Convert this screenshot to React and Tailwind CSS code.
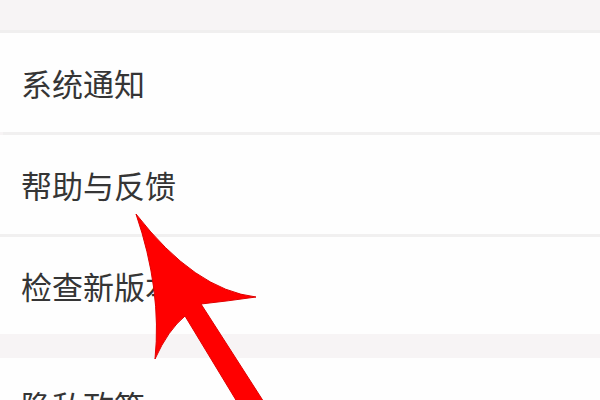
import React from "react";

const font = { fontFamily: '"Noto Sans CJK SC", "Noto Sans", sans-serif' };

function Row({ label, h = "h-[97px]" }) {
  return (
    <div className={`bg-[#fefefe] ${h} flex items-center pl-[21px]`}>
      <span className="text-[31px] leading-none text-[#353535]" style={font}>
        {label}
      </span>
    </div>
  );
}

export default function App() {
  return (
    <div className="relative w-[600px] h-[400px] overflow-hidden bg-[#f7f4f5]">
      <div className="h-[30px] bg-[#f7f4f5]" />
      <div className="h-[3px] bg-[#f0efef]" />
      <Row label="系统通知" h="h-[99px]" />
      <div className="h-[3px] bg-[#f1f0f0] ml-[3px]" />
      <Row label="帮助与反馈" h="h-[99px]" />
      <div className="h-[3px] bg-[#f1f0f0]" />
      <Row label="检查新版本" h="h-[97px]" />
      <div className="h-[24px] bg-[#f7f4f5]" />
      <div className="bg-[#fefefe] h-[80px] pl-[21px] pt-[31px]">
        <span className="text-[31px] leading-none text-[#353535]" style={font}>
          隐私政策
        </span>
      </div>
      <svg
        className="absolute left-0 top-0"
        width="600"
        height="400"
        viewBox="0 0 600 400"
      >
        <path
          d="M136 214 Q195 290 256 297 Q228 301 201 304 L269 410 L242 410 L185 316 Q168 330 155 359 Q162 290 136 214 Z"
          fill="#ff0000"
          stroke="#e00000"
          strokeWidth="1"
          strokeLinejoin="round"
        />
      </svg>
    </div>
  );
}
